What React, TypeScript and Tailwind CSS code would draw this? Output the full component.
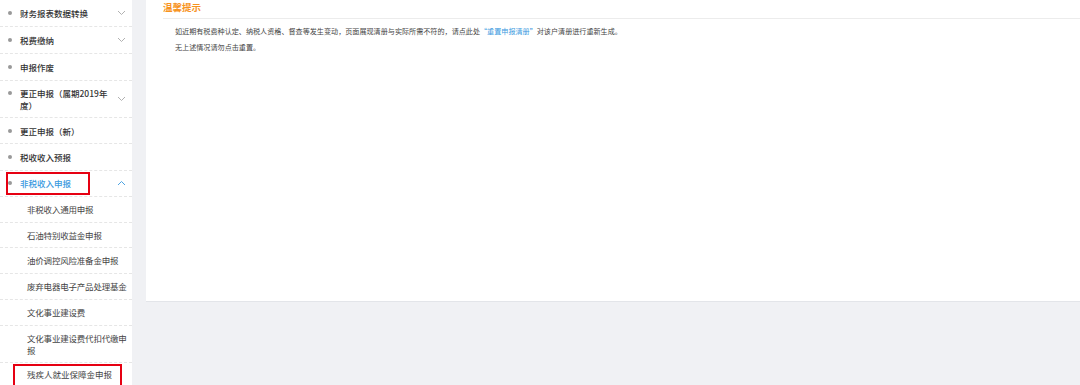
import React from "react";

const font = { fontFamily: '"Noto Sans CJK SC", "Noto Sans", sans-serif' };

const Chevron = ({ up = false }: { up?: boolean }) => (
  <svg
    width="9"
    height="6"
    viewBox="0 0 9 6"
    className={up ? "text-[#3a9ae0]" : "text-[#a8a8a8]"}
  >
    <path
      d={up ? "M1 5 L4.5 1.5 L8 5" : "M1 1 L4.5 4.5 L8 1"}
      fill="none"
      stroke="currentColor"
      strokeWidth="0.9"
    />
  </svg>
);

type Item = { label: string; arrow?: boolean; h: string; lines?: string[] };

const mainItems: Item[] = [
  { label: "财务报表数据转换", arrow: true, h: "h-[27px]" },
  { label: "税费缴纳", arrow: true, h: "h-[27px]" },
  { label: "申报作废", h: "h-[27px]" },
  { label: "", arrow: true, h: "h-[37px]", lines: ["更正申报（属期2019年", "度）"] },
  { label: "更正申报（新）", h: "h-[26px]" },
  { label: "税收收入预报", h: "h-[26.5px]" },
];

const subItems: Item[] = [
  { label: "非税收入通用申报", h: "h-[25.5px]" },
  { label: "石油特别收益金申报", h: "h-[25.5px]" },
  { label: "油价调控风险准备金申报", h: "h-[25.5px]" },
  { label: "废弃电器电子产品处理基金", h: "h-[26px]" },
  { label: "文化事业建设费", h: "h-[26px]" },
  { label: "", h: "h-[37px]", lines: ["文化事业建设费代扣代缴申", "报"] },
];

const App = () => {
  return (
    <div className="flex h-[385px] w-[1080px] overflow-hidden bg-[#f0f1f4]" style={font}>
      <aside className="w-[132px] shrink-0 bg-white text-[8.5px] text-[#333]">
        {mainItems.map((it, i) => (
          <div
            key={i}
            className={`${it.h} flex items-center border-b border-dashed border-[#e6e6e6] pl-[8px] pr-[6px] font-medium`}
          >
            <span className={`w-[4px] h-[4px] rounded-full bg-[#999] mr-[8px] shrink-0 ${it.lines ? "self-start mt-[10px]" : ""}`} />
            <div className="flex-1 leading-[12px]">
              {it.lines ? it.lines.map((l) => <div key={l}>{l}</div>) : it.label}
            </div>
            {it.arrow && <Chevron />}
          </div>
        ))}
        <div className="h-[26.5px] flex items-center border-b border-dashed border-[#e6e6e6] pr-[6px] relative font-medium">
          <div className="absolute left-[6px] top-[1px] w-[84px] h-[23px] border-2 border-[#e60012]" />
          <span className="w-[4px] h-[4px] rounded-full bg-[#999] ml-[8px] mr-[8px] shrink-0" />
          <div className="flex-1 text-[#3a9ae0]">非税收入申报</div>
          <Chevron up />
        </div>
        {subItems.map((it, i) => (
          <div
            key={i}
            className={`${it.h} flex items-center border-b border-dashed border-[#e6e6e6] pl-[27px] text-[#444]`}
          >
            <div className="leading-[12px] whitespace-nowrap tracking-[-0.2px]">
              {it.lines ? it.lines.map((l) => <div key={l}>{l}</div>) : it.label}
            </div>
          </div>
        ))}
        <div className="h-[23px] flex items-center pl-[27px] relative text-[#444]">
          <div className="absolute left-[13px] top-[1px] w-[109px] h-[23px] border-2 border-[#e60012]" />
          <div>残疾人就业保障金申报</div>
        </div>
      </aside>
      <main className="flex-1 pl-[14px]">
        <div className="h-[302px] bg-white border-b border-[#e3e5e9] pl-[17px]">
          <div className="h-[19px] border-b border-[#ececec] flex items-center">
            <span className="text-[9.5px] text-[#f7931e] leading-none font-bold -mt-[2px]">温馨提示</span>
          </div>
          <div className="pl-[12px] pt-[4px] text-[7.1px] text-[#444] leading-[16px]">
            <p>
              如近期有税费种认定、纳税人资格、督查等发生变动，页面展现清册与实际所需不符的，请点此处
              <span className="text-[#3a9ae0]">“重置申报清册”</span>
              对该户清册进行重新生成。
            </p>
            <p>无上述情况请勿点击重置。</p>
          </div>
        </div>
      </main>
    </div>
  );
};

export default App;
